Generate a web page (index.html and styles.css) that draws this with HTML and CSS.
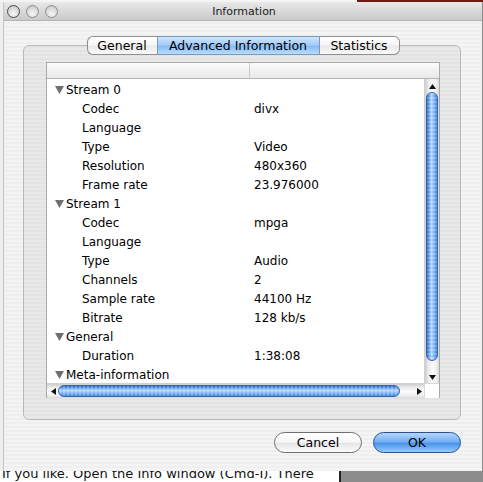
FILE: index.html
```html
<!DOCTYPE html>
<html>
<head>
<meta charset="utf-8">
<title>Information</title>
<link rel="stylesheet" href="styles.css">
</head>
<body>
<div class="desk">
  <div class="topstrip"><div class="ts-white"></div><div class="ts-red"></div></div>
  <div class="mid">
    <div class="leftstrip"></div>
    <div class="window">
      <div class="titlebar">
        <div class="lights">
          <span class="light first"></span>
          <span class="light"></span>
          <span class="light"></span>
        </div>
        <div class="title">Information</div>
      </div>
      <div class="content">
        <div class="tabs">
          <div class="tab t-general">General</div>
          <div class="tab t-adv sel">Advanced Information</div>
          <div class="tab t-stats">Statistics</div>
        </div>
        <div class="box">
          <div class="table">
            <div class="thead"><div class="th th1"></div><div class="th th2"></div></div>
            <div class="tbody">
              <div class="rows">
                <div class="row group"><svg class="tri" width="9" height="8" viewBox="0 0 9 8"><polygon points="0,0 9,0 4.5,8" fill="#6f6f6f"/></svg><span>Stream 0</span></div>
                <div class="row item"><span>Codec</span><span>divx</span></div>
                <div class="row item"><span>Language</span><span></span></div>
                <div class="row item"><span>Type</span><span>Video</span></div>
                <div class="row item"><span>Resolution</span><span>480x360</span></div>
                <div class="row item"><span>Frame rate</span><span>23.976000</span></div>
                <div class="row group"><svg class="tri" width="9" height="8" viewBox="0 0 9 8"><polygon points="0,0 9,0 4.5,8" fill="#6f6f6f"/></svg><span>Stream 1</span></div>
                <div class="row item"><span>Codec</span><span>mpga</span></div>
                <div class="row item"><span>Language</span><span></span></div>
                <div class="row item"><span>Type</span><span>Audio</span></div>
                <div class="row item"><span>Channels</span><span>2</span></div>
                <div class="row item"><span>Sample rate</span><span>44100 Hz</span></div>
                <div class="row item"><span>Bitrate</span><span>128 kb/s</span></div>
                <div class="row group"><svg class="tri" width="9" height="8" viewBox="0 0 9 8"><polygon points="0,0 9,0 4.5,8" fill="#6f6f6f"/></svg><span>General</span></div>
                <div class="row item"><span>Duration</span><span>1:38:08</span></div>
                <div class="row group"><svg class="tri" width="9" height="8" viewBox="0 0 9 8"><polygon points="0,0 9,0 4.5,8" fill="#6f6f6f"/></svg><span>Meta-information</span></div>
              </div>
              <div class="vscroll">
                <div class="arrow-up"><svg width="7" height="5" viewBox="0 0 7 5"><polygon points="0,5 7,5 3.5,0" fill="#111"/></svg></div>
                <div class="vtrack"><div class="vthumb"></div></div>
                <div class="arrow-down"><svg width="7" height="5" viewBox="0 0 7 5"><polygon points="0,0 7,0 3.5,5" fill="#111"/></svg></div>
              </div>
              <div class="hscroll">
                <div class="arrow-left"><svg width="5" height="7" viewBox="0 0 5 7"><polygon points="5,0 5,7 0,3.5" fill="#111"/></svg></div>
                <div class="htrack"><div class="hthumb"></div></div>
                <div class="arrow-right"><svg width="5" height="7" viewBox="0 0 5 7"><polygon points="0,0 0,7 5,3.5" fill="#111"/></svg></div>
              </div>
              <div class="corner"></div>
            </div>
          </div>
        </div>
        <div class="buttons">
          <div class="btn cancel">Cancel</div>
          <div class="btn ok">OK</div>
        </div>
      </div>
    </div>
    <div class="rightstrip"></div>
  </div>
  <div class="bottomstrip">
    <div class="bs-text"><div class="bs-line">If you like. Open the Info window (Cmd-I). There</div></div>
    <div class="bs-bar"></div>
    <div class="bs-gray"></div>
  </div>
</div>
</body>
</html>
```

FILE: styles.css
```css
* { box-sizing: border-box; }
html, body { margin: 0; padding: 0; }
body {
  width: 483px;
  height: 482px;
  overflow: hidden;
  background: #ffffff;
  font-family: "DejaVu Sans", "Liberation Sans", sans-serif;
  font-size: 12px;
  color: #000;
}
.desk { display: flex; flex-direction: column; width: 483px; height: 482px; }

.topstrip { display: flex; height: 2px; }
.ts-white { width: 357px; background: #f4f4f4; }
.ts-red { flex: 1; background: #6e1a10; }

.mid { display: flex; height: 469px; }
.leftstrip { width: 3px; background: #eeeeee; }
.rightstrip { width: 1px; background: #8a8a8a; }

.window {
  width: 479px;
  height: 469px;
  display: flex;
  flex-direction: column;
  border-left: 1px solid #c4c4c4;
  background: repeating-linear-gradient(to bottom, #efefef 0 2px, #f4f4f4 2px 4px);
}

.titlebar {
  height: 19px;
  display: grid;
  align-items: center;
  background: linear-gradient(to bottom, #e8e8e8, #d6d6d6 60%, #cacaca);
  border-bottom: 1px solid #b3b3b3;
}
.lights, .title { grid-area: 1 / 1; }
.lights { display: flex; gap: 6px; padding-left: 3px; justify-self: start; }
.light {
  width: 13px; height: 13px; border-radius: 50%;
  border: 1px solid #8e8e8e;
  background: radial-gradient(circle at 50% 70%, #f6f6f6, #d8d8d8 60%, #bdbdbd);
}
.light.first { border-color: #4a4a4a; }
.title { justify-self: center; font-size: 11px; color: #1a1a1a; padding-left: 2px; }

.content { display: flex; flex-direction: column; padding: 15px 21px 0 19px; }

.tabs {
  position: relative;
  z-index: 1;
  display: flex;
  justify-content: center;
  height: 19px;
  padding-left: 2px;
}
.tab {
  height: 19px;
  display: flex; align-items: center; justify-content: center;
  border: 1px solid #8f8f8f;
  background: linear-gradient(to bottom, #ffffff, #f6f6f6 45%, #e9e9e9 55%, #f9f9f9);
  color: #000;
  font-size: 12.5px;
}
.t-general { width: 70px; border-radius: 6px 0 0 6px; border-right: none; }
.t-adv { width: 163px; }
.t-stats { width: 80px; border-radius: 0 6px 6px 0; border-left: none; }
.tab.sel {
  background: linear-gradient(to bottom, #cfe6fd, #a4cdf8 45%, #86bdf5 55%, #b9dcfc);
  border-color: #7d97b8;
}

.box {
  margin-top: -10px;
  height: 375px;
  border: 1px solid #b8b8b8;
  border-radius: 6px;
  background: repeating-linear-gradient(to bottom, #e3e3e3 0 2px, #e8e8e8 2px 4px);
  padding: 16px 20px 21px 22px;
}

.table {
  width: 394px;
  height: 336px;
  border: 1px solid #a9a9a9;
  background: #ffffff;
  display: flex;
  flex-direction: column;
}
.thead {
  height: 16px;
  display: flex;
  border-bottom: 1px solid #b4b4b4;
  background: linear-gradient(to bottom, #fbfbfb, #f1f1f1 50%, #e9e9e9);
}
.th1 { width: 203px; border-right: 1px solid #c9c9c9; }
.th2 { flex: 1; }

.tbody {
  flex: 1;
  display: grid;
  grid-template-columns: 1fr 15px;
  grid-template-rows: 1fr 15px;
  min-height: 0;
}
.rows { overflow: hidden; padding-top: 1px; }
.row { height: 19px; display: flex; align-items: center; white-space: nowrap; }
.group { padding-left: 8px; gap: 2px; }
.tri { flex: none; }
.item { display: grid; grid-template-columns: 207px 1fr; align-items: center; padding-left: 0; }
.item span:first-child { padding-left: 35px; }

.vscroll {
  display: flex; flex-direction: column;
  background: linear-gradient(to right, #cdcdcd, #ececec 25%, #fbfbfb 55%, #ededed 85%, #d8d8d8);
  border-left: 1px solid #d0d0d0;
}
.arrow-up { height: 12px; display: flex; align-items: center; justify-content: center; padding-top: 2px; }
.arrow-down { height: 10px; display: flex; align-items: center; justify-content: center; padding-bottom: 2px; }
.vtrack { flex: 1; display: flex; flex-direction: column; padding: 1px 1px 12px 1px; }
.vthumb {
  height: 269px;
  border-radius: 6px;
  border: 1px solid #3565b0;
  background:
    repeating-linear-gradient(to bottom, rgba(255,255,255,0.22) 0 2px, rgba(255,255,255,0) 2px 4px),
    linear-gradient(to right, #2f64ba, #5f9cec 20%, #b4d7fc 45%, #7cb5f4 70%, #3e7fdb);
}

.hscroll {
  display: flex; align-items: stretch;
  background: linear-gradient(to bottom, #cdcdcd, #ececec 25%, #fbfbfb 55%, #ededed 85%, #d8d8d8);
  border-top: 1px solid #d0d0d0;
}
.arrow-left { width: 11px; display: flex; align-items: center; justify-content: center; padding-left: 2px; }
.arrow-right { width: 10px; display: flex; align-items: center; justify-content: center; }
.htrack { flex: 1; display: flex; padding: 1px 0; }
.hthumb {
  width: 342px;
  border-radius: 6px;
  border: 1px solid #3565b0;
  background:
    repeating-linear-gradient(to right, rgba(255,255,255,0.22) 0 2px, rgba(255,255,255,0) 2px 4px),
    linear-gradient(to bottom, #2f64ba, #5f9cec 20%, #b4d7fc 45%, #7cb5f4 70%, #3e7fdb);
}
.corner { background: #ffffff; border-top: 1px solid #d8d8d8; border-left: 1px solid #d8d8d8; }

.buttons {
  display: flex;
  justify-content: flex-end;
  gap: 11px;
  margin-top: 12px;
  padding-right: 0;
}
.btn {
  width: 88px; height: 21px;
  border-radius: 11px;
  display: flex; align-items: center; justify-content: center;
  font-size: 12.5px;
}
.cancel {
  border: 1px solid #6f6f6f;
  background: linear-gradient(to bottom, #ffffff, #f7f7f7 45%, #e6e6e6 55%, #fbfbfb);
}
.ok {
  border: 1px solid #2d4f8a;
  background: linear-gradient(to bottom, #b3d6fb, #74b0f2 45%, #4b94ec 55%, #93cbfb);
}

.bottomstrip { display: flex; height: 11px; }
.bs-text { width: 339px; height: 11px; overflow: hidden; background: #ffffff; }
.bs-line { margin-top: -5px; font-size: 13px; line-height: 16px; white-space: nowrap; color: #111; padding-left: 2px; }
.bs-bar { width: 2px; background: #222; }
.bs-gray { flex: 1; background: #8d8d8d; }
```
